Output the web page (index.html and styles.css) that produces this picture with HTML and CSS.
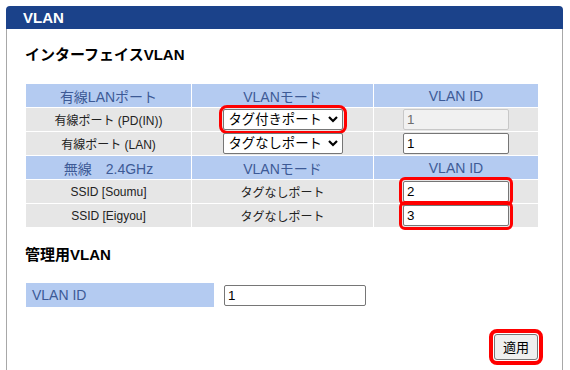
FILE: index.html
```html
<!DOCTYPE html>
<html lang="ja">
<head>
    <meta charset="UTF-8">
    <meta name="viewport" content="width=device-width, initial-scale=1.0">
    <title>VLAN</title>
    <link rel="stylesheet" href="styles.css">
</head>
<body>
    <div class="panel">
        <div class="panel-title">VLAN</div>
        <div class="panel-body">
            <h2>インターフェイスVLAN</h2>
            <table class="vlan-table">
                <tr class="head">
                    <th>有線LANポート</th>
                    <th>VLANモード</th>
                    <th>VLAN ID</th>
                </tr>
                <tr>
                    <td>有線ポート (PD(IN))</td>
                    <td>
                        <span class="select-wrap mark">
                            <select>
                                <option>タグ付きポート</option>
                                <option>タグなしポート</option>
                            </select>
                            <svg class="chevron" width="10" height="7" viewBox="0 0 10 7"><polyline points="1,1 5,5 9,1" fill="none" stroke="#000" stroke-width="2.2"/></svg>
                        </span>
                    </td>
                    <td><input type="text" value="1" disabled></td>
                </tr>
                <tr>
                    <td>有線ポート (LAN)</td>
                    <td>
                        <span class="select-wrap">
                            <select>
                                <option>タグなしポート</option>
                                <option>タグ付きポート</option>
                            </select>
                            <svg class="chevron" width="10" height="7" viewBox="0 0 10 7"><polyline points="1,1 5,5 9,1" fill="none" stroke="#000" stroke-width="2.2"/></svg>
                        </span>
                    </td>
                    <td><input type="text" value="1"></td>
                </tr>
                <tr class="head">
                    <th>無線　2.4GHz</th>
                    <th>VLANモード</th>
                    <th>VLAN ID</th>
                </tr>
                <tr>
                    <td>SSID [Soumu]</td>
                    <td>タグなしポート</td>
                    <td><input type="text" class="mark" value="2"></td>
                </tr>
                <tr>
                    <td>SSID [Eigyou]</td>
                    <td>タグなしポート</td>
                    <td><input type="text" class="mark" value="3"></td>
                </tr>
            </table>

            <h2 class="sub">管理用VLAN</h2>
            <div class="mgmt-row">
                <div class="mgmt-label">VLAN ID</div>
                <input type="text" class="mgmt-input" value="1">
            </div>

            <div class="actions">
                <button class="mark-btn">適用</button>
            </div>
        </div>
    </div>
</body>
</html>
```

FILE: styles.css
```css
html, body {
    overflow: hidden;
}
body {
    font-family: "Liberation Sans", Arial, "Noto Sans CJK JP", sans-serif;
    background-color: #fff;
    color: #222;
    margin: 6px 7px 0 6px;
}
.panel {
    border-radius: 4px 4px 0 0;
}
.panel-title {
    background-color: #1b428a;
    color: #fff;
    font-weight: bold;
    font-size: 15px;
    line-height: 23px;
    height: 23px;
    padding-left: 17px;
    border-radius: 4px 4px 0 0;
}
.panel-body {
    border-left: 1px solid #a8a8a8;
    border-right: 1px solid #a8a8a8;
    padding: 16px 0 30px 18px;
}
h2 {
    font-size: 15px;
    line-height: 20px;
    font-weight: bold;
    color: #000;
    margin: 0 0 18px 0;
}
h2.sub {
    margin-top: 17px;
    margin-bottom: 18px;
}
.vlan-table {
    border-collapse: separate;
    border-spacing: 1px;
    width: 514px;
}
.vlan-table th,
.vlan-table td {
    height: 23px;
    padding: 0;
    text-align: center;
    vertical-align: middle;
}
.vlan-table th {
    background-color: #b4cbf1;
    color: #3d5a96;
    font-weight: normal;
    font-size: 14px;
}
.vlan-table th:nth-child(1) { width: 165px; }
.vlan-table th:nth-child(2) { width: 181px; }
.vlan-table th:nth-child(3) { width: 164px; }
.vlan-table td {
    background-color: #e6e6e6;
    font-size: 12px;
    color: #222;
}
.select-wrap {
    position: relative;
    display: inline-block;
    vertical-align: middle;
    line-height: 0;
}
.select-wrap select {
    appearance: none;
    -webkit-appearance: none;
    width: 120px;
    height: 21px;
    box-sizing: border-box;
    border: 1px solid #767676;
    border-radius: 2px;
    background-color: #fff;
    color: #000;
    font-family: "Liberation Sans", Arial, "Noto Sans CJK JP", sans-serif;
    font-size: 13.33px;
    line-height: 17px;
    padding: 0 18px 0 5px;
    margin: 0;
}
.chevron {
    position: absolute;
    right: 5px;
    top: 7px;
    pointer-events: none;
}
input[type="text"] {
    width: 106px;
    height: 21px;
    box-sizing: border-box;
    border: 1px solid #767676;
    border-radius: 2px;
    background-color: #fff;
    color: #000;
    font-family: "Liberation Sans", Arial, sans-serif;
    font-size: 13.33px;
    padding: 1px 3px;
    margin: 0;
    vertical-align: middle;
}
input[type="text"]:disabled {
    background-color: #f1f1f1;
    border-color: #c8c8c8;
    color: #6d6d6d;
}
.mark {
    outline: 3px solid #f00;
    outline-offset: 1px;
    border-radius: 4px;
}
.mgmt-row {
    display: flex;
    align-items: center;
    gap: 10px;
    margin-left: 1px;
}
.mgmt-label {
    width: 182px;
    height: 24px;
    line-height: 24px;
    background-color: #b4cbf1;
    color: #3d5a96;
    font-size: 14px;
    padding-left: 6px;
}
.mgmt-input.mgmt-input {
    width: 142px;
}
.actions {
    width: 513px;
    display: flex;
    justify-content: flex-end;
    margin-top: 27px;
}
.actions button {
    background-color: #efefef;
    border: 1px solid #767676;
    border-radius: 3px;
    font-family: "Noto Sans CJK JP", sans-serif;
    font-size: 13px;
    line-height: 16px;
    height: 26px;
    padding: 0 8px;
    color: #000;
    cursor: pointer;
}
.mark-btn {
    outline: 4px solid #f00;
    outline-offset: 1px;
}
```
